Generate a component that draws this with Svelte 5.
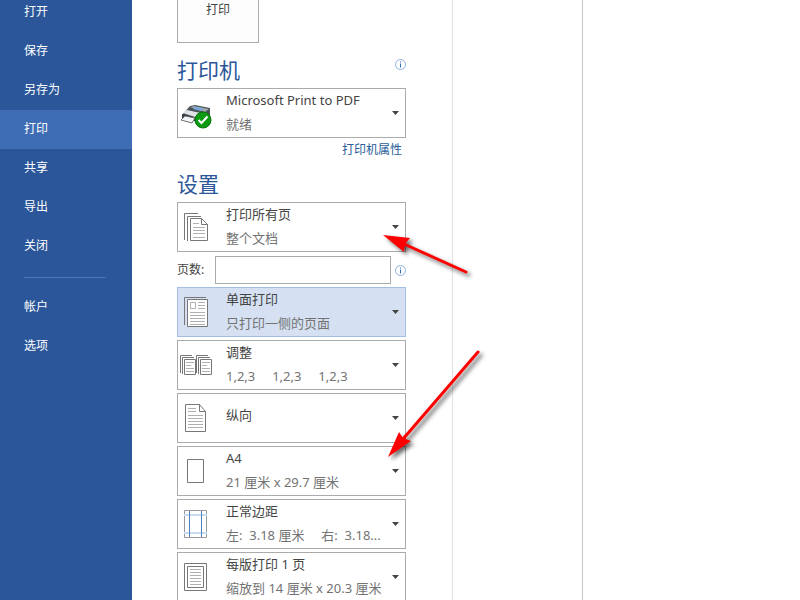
<script>
	let active = $state('打印');
	let pages = $state('');

	const menu = ['打开', '保存', '另存为', '打印', '共享', '导出', '关闭'];
	const footerMenu = ['帐户', '选项'];

	const settings = [
		{ icon: 'single', label: '单面打印', desc: '只打印一侧的页面', selected: true },
		{ icon: 'collate', label: '调整', desc: '1,2,3     1,2,3     1,2,3' },
		{ icon: 'portrait', label: '纵向' },
		{ icon: 'paper', label: 'A4', desc: '21 厘米 x 29.7 厘米' },
		{ icon: 'margins', label: '正常边距', desc: '左:  3.18 厘米     右:  3.18...' },
		{ icon: 'sheet', label: '每版打印 1 页', desc: '缩放到 14 厘米 x 20.3 厘米' }
	];
</script>

{#snippet icon(name)}
	<svg class="icon" viewBox="0 0 40 48" aria-hidden="true">
		{#if name === 'printer'}
			<path d="M12 17 L17 16 L32 19 L32 26 L20 31 L4 26 Z" fill="#4b5258" />
			<path d="M12 18 L16 17 L31 20 L27 23 Z" fill="#9aa5ae" />
			<path d="M16 18 L25 19 L23 22 L15 20 Z" fill="#76a9dc" />
			<path d="M5 24 L9 21 L27 25 L20 29 Z" fill="#dfe3e6" />
			<path d="M4 25 L20 29 V33 L4 29 Z" fill="#343a3f" />
			<path d="M7 27 L17 29 L14 34 L3 31 Z" fill="#f3f4f5" stroke="#6c7174" />
			<circle cx="25" cy="31" r="8" fill="#0b9a12" stroke="#08760d" />
			<path d="M20.500 31 L23.500 34 L29.500 27.500" fill="none" stroke="#fff" stroke-width="2" />
		{:else if name === 'pages'}
			<path class="line" d="M6.500 37V10.500H20M9.500 38V13.500H23" />
			<path class="page" d="M12.500 15.500H23.500L29.500 21.500V37.500H12.500Z M23.500 15.500V21.500H29.500" />
			<path class="text" d="M15 20.500H21M15 24.500H27M15 27.500H27M15 30.500H27M15 34.500H27" />
		{:else if name === 'single'}
			<path class="line" d="M6.500 37V9.500H28" />
			<path class="page" d="M9.500 11.500H29.500V38.500H9.500Z" />
			<path class="text" d="M12.500 14.500H17.500V20.500H12.500ZM20 14.500H27M20 17.500H27M20 20.500H27M12 24.500H27M12 27.500H27M12 30.500H27M12 33.500H27M12 36.500H27" />
		{:else if name === 'collate'}
			{#each [0, 16] as x}
				<g transform="translate({x} 0)">
					<path class="line" d="M2.500 32V14.500H14M4.500 33V16.500H16" />
					<path class="page" d="M6.500 18.500H17.500V33.500H6.500Z" />
					<path class="text" d="M8 21.500H16M8 24.500H13M8 27.500H16M8 30.500H16" />
				</g>
			{/each}
		{:else if name === 'portrait'}
			<path class="page" d="M7.500 10.500H21.500L27.500 17.500V37.500H7.500Z M21.500 10.500V17.500H27.500" />
			<path class="text" d="M10 14.500H18M10 17.500H18M10 21.500H25M10 24.500H25M10 27.500H25M10 30.500H25M10 33.500H25" />
		{:else if name === 'paper'}
			<path class="page" d="M9.500 12.500H25.500V35.500H9.500Z" />
		{:else if name === 'margins'}
			<path class="page faint" d="M6.500 10.500H28.500V37.500H6.500Z" />
			<path d="M6 15H29M6 33H29" stroke="#c9daef" stroke-width="2" />
			<path d="M11.500 11V37M23.500 11V37" stroke="#4f81bd" />
		{:else if name === 'sheet'}
			<path class="page" d="M6.500 10.500H28.500V37.500H6.500ZM9.500 13.500H25.500V34.500H9.500Z" />
			<path class="text" d="M12 16.500H23M12 19.500H23M12 22.500H23M12 25.500H23M12 28.500H23M12 31.500H23" />
		{/if}
	</svg>
{/snippet}

{#snippet info()}
	<svg class="info" viewBox="0 0 11 11" role="img" aria-label="信息">
		<circle cx="5.500" cy="5.500" r="5" fill="#fff" stroke="#8fb0de" />
		<path d="M5.500 2.500V3.500M5.500 4.500V8.500" stroke="#2f6fc0" />
	</svg>
{/snippet}

{#snippet dropdown(item)}
	<label class="dropdown" class:selected={item.selected}>
		{@render icon(item.icon)}
		<span class="lines" class:single={!item.desc}>
			<select aria-label={item.label}>
				<option>{item.label}</option>
			</select>
			{#if item.desc}
				<span class="desc">{item.desc}</span>
			{/if}
		</span>
		<svg class="caret" viewBox="0 0 7 4" aria-hidden="true"><path d="M0 0H7L3.500 4Z" /></svg>
	</label>
{/snippet}

<div class="backstage">
	<nav class="sidebar">
		{#each menu as item}
			<button class="nav-item" class:active={active === item} onclick={() => (active = item)}>{item}</button>
		{/each}
		<hr />
		{#each footerMenu as item}
			<button class="nav-item" class:active={active === item} onclick={() => (active = item)}>{item}</button>
		{/each}
	</nav>

	<main class="print">
		<button class="print-button">打印</button>

		<div class="heading">
			<h2>打印机</h2>
			{@render info()}
		</div>
		{@render dropdown({ icon: 'printer', label: 'Microsoft Print to PDF', desc: '就绪' })}
		<a class="properties" href="#properties">打印机属性</a>

		<div class="heading">
			<h2>设置</h2>
		</div>
		<div class="settings">
			{@render dropdown({ icon: 'pages', label: '打印所有页', desc: '整个文档' })}
			<div class="pages">
				<label for="pages">页数:</label>
				<input id="pages" type="text" bind:value={pages} />
				{@render info()}
			</div>
			{#each settings as item}
				{@render dropdown(item)}
			{/each}
		</div>
	</main>

	<div class="gutter"></div>
	<section class="preview" aria-label="预览"></section>

	<!-- pointers laid over the form -->
	<svg class="pointers" width="800" height="600" aria-hidden="true">
		<g>
			<path d="M404 244L466 272" />
			<polygon points="383,235 410,238 405,244 404,252" />
		</g>
		<g>
			<path d="M403 439L478 352" />
			<polygon points="388,457 399,432 403,438 411,441" />
		</g>
	</svg>
</div>

<style>
	:global(body) {
		margin: 0;
		background: #fff;
	}

	.backstage {
		position: relative;
		display: flex;
		height: 100vh;
		overflow: hidden;
		font-family: 'Noto Sans', 'Noto Sans CJK SC', sans-serif;
		font-size: 13px;
		color: #444;
	}

	button,
	input,
	select {
		font: inherit;
		color: inherit;
	}

	.sidebar {
		flex: 0 0 132px;
		display: flex;
		flex-direction: column;
		background: #2b579a;
		color: #fff;
	}

	.nav-item {
		flex: none;
		height: 39px;
		padding: 0 24px 3px;
		border: 0;
		background: none;
		font-size: 12px;
		text-align: left;
		cursor: pointer;
	}

	/* the list is scrolled up a little */
	.nav-item:first-child {
		margin-top: -7px;
	}

	.nav-item.active {
		background: #3e6db5;
	}

	hr {
		flex: none;
		height: 1px;
		margin: 11px 26px 10px 24px;
		border: 0;
		background: #4a76bb;
	}

	.print {
		box-sizing: border-box;
		flex: 0 0 321px;
		min-width: 0;
		padding: 0 46px 0 45px;
		border-right: 1px solid #e1e1e1;
	}

	.print-button {
		box-sizing: border-box;
		display: flex;
		align-items: flex-end;
		justify-content: center;
		width: 82px;
		height: 88px;
		margin: -45px 0 1px;
		padding: 0 0 23px;
		border: 1px solid #ababab;
		background: #fdfdfd;
		font-size: 12px;
		line-height: 18px;
	}

	.heading {
		display: flex;
		justify-content: space-between;
		align-items: center;
		height: 44px;
	}

	h2 {
		margin: 8px 0 0;
		font-size: 21px;
		line-height: 28px;
		font-weight: 400;
		color: #2b579a;
	}

	.info {
		flex: none;
		width: 11px;
		height: 11px;
	}

	.heading .info {
		margin-bottom: 4px;
	}

	.dropdown {
		box-sizing: border-box;
		display: flex;
		align-items: center;
		height: 50px;
		padding-right: 6px;
		border: 1px solid #ababab;
		background: #fff;
	}

	.dropdown.selected {
		border-color: #a3bde3;
		background: #d5e1f2;
	}

	.icon {
		flex: none;
		width: 40px;
		height: 48px;
		margin-right: 8px;
	}

	.page {
		fill: #fff;
		stroke: #777;
	}

	.page.faint {
		stroke: #999;
	}

	.line {
		fill: none;
		stroke: #777;
	}

	.text {
		fill: none;
		stroke: #b0b0b0;
	}

	.lines {
		flex: 1;
		min-width: 0;
		display: flex;
		flex-direction: column;
		padding-bottom: 2px;
	}

	.lines.single {
		padding-bottom: 6px;
	}

	select {
		appearance: none;
		height: 24px;
		margin: 0;
		padding: 0;
		border: 0;
		background: none;
		line-height: 24px;
	}

	.desc {
		line-height: 24px;
		color: #737373;
		white-space: pre;
	}

	.caret {
		flex: none;
		width: 7px;
		height: 4px;
		fill: #444;
	}

	.properties {
		display: block;
		padding: 4px 4px 0 0;
		font-size: 12px;
		line-height: 16px;
		text-align: right;
		text-decoration: none;
		color: #2a6099;
	}

	.settings {
		display: flex;
		flex-direction: column;
		gap: 3px;
	}

	.pages {
		display: flex;
		align-items: center;
		padding-top: 1px;
	}

	.pages label {
		flex: none;
		width: 38px;
		padding-bottom: 3px;
		font-size: 12px;
	}

	.pages input {
		box-sizing: border-box;
		flex: 1;
		width: 0;
		height: 28px;
		margin-right: 4px;
		padding: 0 4px;
		border: 1px solid #ababab;
	}

	.gutter {
		flex: 0 0 129px;
		border-right: 1px solid #c6c6c6;
	}

	.preview {
		flex: 1;
	}

	.pointers {
		position: absolute;
		top: 0;
		left: 0;
		pointer-events: none;
	}

	.pointers g {
		filter: drop-shadow(3px 3px 2px rgba(0, 0, 0, 0.6));
	}

	.pointers path {
		stroke: #f00;
		stroke-width: 3;
		stroke-linecap: round;
	}

	.pointers polygon {
		fill: #f00;
	}
</style>
